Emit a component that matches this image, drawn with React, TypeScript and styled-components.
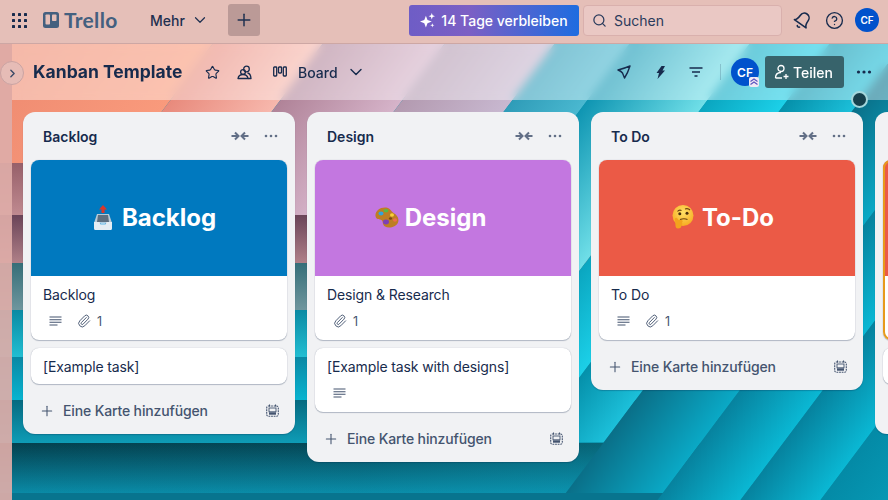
import React from "react";
import styled, { createGlobalStyle } from "styled-components";
import { ChevronDown, ChevronRight, Plus, Search, HelpCircle, Star, Paperclip } from "lucide-react";

const Global = createGlobalStyle`
  html, body { margin: 0; padding: 0; }
  body { width: 888px; height: 500px; overflow: hidden; font-family: Inter, "Noto Sans", sans-serif; color: #172b4d; }
  * { box-sizing: border-box; }
`;

const Page = styled.div`
  width: 888px; height: 500px; display: flex; flex-direction: column; overflow: hidden; background: #0a7f96;
`;
const TopBar = styled.header`
  height: 44px; flex: none; display: flex; align-items: center; padding: 0 0 3px 12px;
  background: #e5bfb8; border-bottom: 1px solid #cda7a4; color: #2a3b5c;
`;
const AppGrid = styled.svg` width: 15px; height: 15px; flex: none; `;
const Logo = styled.div`
  display: flex; align-items: center; gap: 5px; margin-left: 16px; color: #44607f; width: 107px;
  font: 700 21px/24px Lato, sans-serif; letter-spacing: .3px;
`;
const MenuButton = styled.div`
  display: flex; align-items: center; gap: 6px; font-size: 14px; font-weight: 500; color: #1f3050; width: 78px;
`;
const CreateButton = styled.div`
  width: 32px; height: 32px; border-radius: 3px; background: #bb9a97; display: flex; align-items: center; justify-content: center; color: #1f3050;
`;
const Trial = styled.div`
  margin-left: 149px; width: 170px; height: 31px; border-radius: 3px; display: flex; align-items: center; justify-content: center; gap: 6px;
  color: #fff; font-size: 14px; font-weight: 500; background: linear-gradient(90deg, #6e5dc6, #7c5fc4 35%, #1e6ce0);
`;
const SearchBox = styled.div`
  margin-left: 4px; width: 199px; height: 31px; border-radius: 4px; border: 1px solid #d9b0ad; background: #eac8c4;
  display: flex; align-items: center; gap: 7px; padding-left: 8px; font-size: 14px; color: #2a3b5c;
`;
const TopIcons = styled.div`
  display: flex; align-items: center; margin-left: 11px; gap: 13px; color: #172b4d;
`;
const TiltedBell = styled.svg`
  width: 19px; height: 19px; transform: rotate(35deg);
`;
const Avatar = styled.div<{ $size: number; $font: number }>`
  position: relative; width: ${p => p.$size}px; height: ${p => p.$size}px; border-radius: 50%; background: #0052cc; color: #fff;
  display: flex; align-items: center; justify-content: center; font-size: ${p => p.$font}px; font-weight: 600; flex: none;
`;
const TopAvatar = styled(Avatar)`
  margin-left: -2px;
`;
const AdminBadge = styled.svg`
  position: absolute; right: 0; bottom: -1px; width: 10px; height: 10px;
`;
const Body = styled.div`
  position: relative; flex: 1; display: flex; min-height: 0;
`;
const Wallpaper = styled.svg`
  position: absolute; inset: 0; width: 888px; height: 456px;
`;
const SideRail = styled.div`
  position: relative; width: 12px; flex: none; background: rgba(222, 172, 168, .92);
`;
const RailToggle = styled.div`
  position: absolute; left: 0; top: 17px; width: 24px; height: 24px; border-radius: 50%; background: #e6bcb6; border: 1px solid #c9a3a2;
  display: flex; align-items: center; justify-content: center; color: #3a4a68; z-index: 2;
`;
const Main = styled.div`
  position: relative; flex: 1; min-width: 0; display: flex; flex-direction: column;
`;
const BoardBar = styled.div`
  height: 56px; flex: none; display: flex; align-items: center; padding-left: 21px; color: #172b4d;
  background: rgba(255, 255, 255, .4); backdrop-filter: blur(5px);
`;
const BoardTitle = styled.h1`
  margin: 0; font-size: 17.5px; font-weight: 700; line-height: 24px; width: 172px; color: #172b4d;
`;
const BarIcon = styled.div<{ $w: number }>`
  width: ${p => p.$w}px; display: flex; align-items: center; flex: none;
`;
const ViewSwitch = styled.div`
  display: flex; align-items: center; font-size: 14px; font-weight: 500; color: #172b4d; gap: 11px; width: 344px; margin-left: 11px; flex: none;
`;
const ViewChevron = styled(ChevronDown)`
  margin-left: -3px;
`;
const Divider = styled.div`
  width: 1px; height: 16px; background: rgba(23, 43, 77, .2); margin: 0 10px 0 0; flex: none;
`;
const ShareButton = styled.div`
  margin-left: 6px; width: 79px; height: 32px; border-radius: 3px; background: #37636b; color: #fff; font-size: 14px; font-weight: 500;
  display: flex; align-items: center; gap: 3px; padding-left: 9px; flex: none;
`;
const MoreDark = styled.svg` margin-left: 11px; width: 18px; height: 18px; flex: none; `;
const Dot = styled.div`
  position: absolute; right: 20px; top: 47px; width: 17px; height: 17px; border-radius: 50%; background: #16404c; border: 2px solid #a4d7dc; z-index: 3;
`;
const Lists = styled.div`
  display: flex; align-items: flex-start; gap: 12px; padding: 12px 0 0 11px; overflow: hidden; flex: 1;
`;
const List = styled.section`
  width: 272px; flex: none; border-radius: 12px; background: #f1f2f4; padding: 0 8px; box-shadow: 0 1px 1px #091e4240;
`;
const ListHead = styled.div`
  height: 48px; display: flex; align-items: center; padding: 0 8px 0 12px;
`;
const ListName = styled.h2`
  margin: 0; flex: 1; font-size: 14px; font-weight: 600; color: #172b4d;
`;
const ListTools = styled.div`
  display: flex; align-items: center; gap: 14px; color: #626f86;
`;
const Stack = styled.div`
  display: flex; flex-direction: column; gap: 8px;
`;
const Card = styled.article<{ $edge?: string }>`
  background: #fff; border-radius: 8px; overflow: hidden; box-shadow: 0 1px 1px #091e4240, 0 0 1px #091e424f;
  ${p => p.$edge ? `outline: 2px solid ${p.$edge}; outline-offset: -2px;` : ""}
`;
const Cover = styled.div<{ $bg: string; $shift: number; $gap: number }>`
  height: 116px; background: ${p => p.$bg}; display: flex; align-items: center; justify-content: center; gap: ${p => p.$gap}px;
  color: #fff; font-size: 24px; font-weight: 700; padding: 0 ${p => p.$shift}px 2px 0;
`;
const CardBody = styled.div`
  padding: 9px 12px 7px; min-height: 36px;
`;
const CardTitle = styled.div`
  font-size: 14px; line-height: 20px; color: #172b4d; letter-spacing: -.12px;
`;
const Badges = styled.div`
  display: flex; align-items: center; gap: 15px; height: 24px; margin-top: 4px; padding-left: 6px; color: #44546f; font-size: 12.5px;
`;
const Badge = styled.span`
  display: flex; align-items: center; gap: 6px; white-space: nowrap;
`;
const AddRow = styled.div`
  height: 50px; display: flex; align-items: center; padding: 3px 8px 0; color: #44546f; font-size: 14px; font-weight: 500; gap: 8px; letter-spacing: -.14px;
`;
const AddLabel = styled.span` flex: 1; `;

const Dots = () => (
  <svg width="16" height="16" viewBox="0 0 16 16" fill="currentColor"><circle cx="3" cy="8" r="1.3" /><circle cx="8" cy="8" r="1.3" /><circle cx="13" cy="8" r="1.3" /></svg>
);
const Collapse = () => (
  <svg width="18" height="12" viewBox="0 0 18 12" fill="none" stroke="currentColor" strokeWidth="2"><path d="M0.5 6H7M4 2.500 7.500 6 4 9.500" /><path d="M17.500 6H11M14 2.500 10.500 6 14 9.500" /></svg>
);
const Lines = () => (
  <svg width="13" height="10" viewBox="0 0 13 10" fill="none" stroke="currentColor" strokeWidth="1.100"><path d="M.5 1h12M.5 3.700h12M.5 6.300h12M.5 9h8" /></svg>
);
const TemplateIcon = () => (
  <svg width="13" height="13" viewBox="0 0 13 13" fill="none" stroke="currentColor" strokeWidth="1.100"><rect x=".7" y="2" width="11.600" height="10.300" rx="1.800" strokeDasharray="1.800 .8" /><rect x="3" y="4" width="7" height="3.800" stroke="currentColor" strokeWidth=".9" /><rect x="3" y="8.300" width="7" height="2.400" fill="currentColor" stroke="none" /><path d="M3.500 .5v2M9.500 .5v2" /></svg>
);
const Inbox = () => (
  <svg width="20" height="25" viewBox="0 0 20 25">
    <path d="M10 0 14 4.500H11.500V8H8.500V4.500H6Z" fill="#d9362b" />
    <path d="M4 9H16L19 18H1Z" fill="#b8c9d6" /><path d="M5 10H15L16 17H4Z" fill="#5d6f80" />
    <path d="M1 17H6.500Q7 20 10 20T13.500 17H19V23.500Q19 25 17.500 25H2.500Q1 25 1 23.500Z" fill="#e4edf3" />
    <path d="M7 17.500H13L12 20H8Z" fill="#9fd2ee" />
  </svg>
);
const Palette = () => (
  <svg width="24" height="21" viewBox="0 0 24 21">
    <path d="M11 0.500C5 0 0 4 0.500 9 1 13 5 12 6.500 13 8.500 14.500 7 17.500 10 19.500 14 22 21 20 23 15.500 24.500 11 22 8 18.500 6 15.500 3.500 15 1 11 .5Z" fill="#bd7e24" />
    <ellipse cx="6" cy="6.500" rx="2.500" ry="2" fill="#2fa3e0" />
    <ellipse cx="11" cy="3.800" rx="2.400" ry="1.800" fill="#57b947" />
    <ellipse cx="17" cy="8" rx="2" ry="1.700" fill="#f6cf39" />
    <ellipse cx="20" cy="13" rx="2" ry="1.800" fill="#ee6c4d" />
    <ellipse cx="11" cy="15" rx="3" ry="2.400" fill="#7d3fb5" />
    <ellipse cx="15.500" cy="11.500" rx="1.600" ry="1.300" fill="#7a4a16" />
  </svg>
);
const Thinking = () => (
  <svg width="22" height="24" viewBox="0 0 22 24">
    <defs><radialGradient id="th" cx=".5" cy=".35" r=".7"><stop offset="0" stopColor="#ffe066" /><stop offset="1" stopColor="#f6a81c" /></radialGradient></defs>
    <circle cx="11" cy="10.500" r="10.500" fill="url(#th)" />
    <path d="M5.500 6.500Q7 4.500 9.500 5.500M13 4Q16 3 18 5" stroke="#6b4310" strokeWidth="1.200" fill="none" />
    <circle cx="7.800" cy="8.800" r="1.500" fill="#4a2f0c" /><circle cx="15" cy="8.300" r="1.500" fill="#4a2f0c" />
    <path d="M8 14.500Q12 13 15.500 14.500" stroke="#6b4310" strokeWidth="1.200" fill="none" />
    <path d="M3 15.500C2 13 4.500 12 5.500 13.500L6.500 15H10Q11.500 16 10 17.500 11 19 9.500 20 9.500 23.500 6 23.500 3.500 23.500 3.500 20.500Z" fill="#f3a31e" />
  </svg>
);

/* Wallpaper geometry: diagonal panels whose edges run at dx/dy = -0.75, and a staircase of horizontal bands. */
const edge = (x110: number, y: number) => x110 - 0.75 * (y - 110);
type PanelSpec = [number, number, number, number, string, string];
const panels: PanelSpec[] = [
  [-300, 163, 44, 163, "#ee8a70", "#f99a7c"],
  [163, 273, 44, 163, "#e88a7c", "#f7b8ad"],
  [273, 395, 44, 215, "#b08398", "#d6b4ca"],
  [395, 505, 44, 215, "#b39ab0", "#c8b8d0"],
  [505, 580, 44, 215, "#2f9cb8", "#4ab8d0"],
  [580, 700, 44, 442, "#0f95b2", "#70dfe8"],
  [700, 780, 44, 442, "#0aa6c0", "#1cd0e8"],
  [780, 853, 44, 442, "#0590aa", "#1cc0da"],
  [853, 950, 44, 493, "#0a6f88", "#0aa9c6"],
  [950, 1033, 44, 500, "#07829e", "#0ab8d4"],
  [1033, 1113, 44, 500, "#06829e", "#0ab8d4"],
  [1113, 1300, 44, 500, "#048aa6", "#0ab0cc"],
];
const bands: [number, number, string, string][] = [
  [163, 215, "#96606a", "#c08a90"],
  [215, 263, "#6a4458", "#b08088"],
  [263, 310, "#356e78", "#6f969e"],
  [310, 357, "#0a8aa3", "#22bed2"],
  [357, 400, "#0a88a4", "#08b4d0"],
  [400, 443, "#066a80", "#0e9cb6"],
  [443, 493, "#04404e", "#0a8aa6"],
  [493, 500, "#08748e", "#08748e"],
];

const wall = (
  <Wallpaper viewBox="0 44 888 456" preserveAspectRatio="none">
    <defs>
      {bands.map(([t, b, c1, c2], i) => (
        <linearGradient key={i} id={`band${i}`} gradientUnits="userSpaceOnUse" x1="0" y1={t} x2="0" y2={b}>
          <stop offset="0" stopColor={c1} /><stop offset="1" stopColor={c2} />
        </linearGradient>
      ))}
      {panels.map(([l, r, , , c1, c2], i) => {
        const w = Math.min(r - l, 200);
        return (
          <linearGradient key={i} id={`panel${i}`} gradientUnits="userSpaceOnUse" x1={r - w} y1="110" x2={r - w + w * 0.64} y2={110 + w * 0.48}>
            <stop offset="0" stopColor={c1} /><stop offset="1" stopColor={c2} />
          </linearGradient>
        );
      })}
      <linearGradient id="lift" x1="0" x2="1" y1="0" y2="0">
        <stop offset="0" stopColor="#0ea5c0" stopOpacity="0" /><stop offset=".5" stopColor="#0ea5c0" stopOpacity=".08" /><stop offset="1" stopColor="#0ea5c0" stopOpacity=".5" />
      </linearGradient>
    </defs>
    <rect x="0" y="44" width="888" height="456" fill="#0a8ea8" />
    {bands.map(([t, b], i) => <rect key={i} x="0" y={t} width="720" height={b - t} fill={`url(#band${i})`} />)}
    <rect x="0" y="443" width="720" height="50" fill="url(#lift)" />
    {panels.map(([l, r, t, b], i) => (
      <polygon key={i} fill={`url(#panel${i})`} points={`${edge(l, t)},${t} ${edge(r, t)},${t} ${edge(r, b)},${b} ${edge(l, b)},${b}`} />
    ))}
  </Wallpaper>
);

type Col = {
  name: string; cover: string; shift: number; gap: number; art: React.ReactNode; coverText: string; title: string; desc: boolean;
  second?: { text: string; desc: boolean };
};
const cols: Col[] = [
  { name: "Backlog", cover: "#0079bf", shift: 9, gap: 9, art: <Inbox />, coverText: "Backlog", title: "Backlog", desc: true, second: { text: "[Example task]", desc: false } },
  { name: "Design", cover: "#c377e0", shift: 25, gap: 6, art: <Palette />, coverText: "Design", title: "Design & Research", desc: false, second: { text: "[Example task with designs]", desc: true } },
  { name: "To Do", cover: "#eb5a46", shift: 8, gap: 8, art: <Thinking />, coverText: "To-Do", title: "To Do", desc: true },
];

const ListView = ({ c }: { c: Col }) => (
  <List>
    <ListHead>
      <ListName>{c.name}</ListName>
      <ListTools><Collapse /><Dots /></ListTools>
    </ListHead>
    <Stack>
      <Card>
        <Cover $bg={c.cover} $shift={c.shift} $gap={c.gap}>{c.art}<span>{c.coverText}</span></Cover>
        <CardBody>
          <CardTitle>{c.title}</CardTitle>
          <Badges>
            {c.desc && <Badge><Lines /></Badge>}
            <Badge><Paperclip size={14} strokeWidth={1.6} />1</Badge>
          </Badges>
        </CardBody>
      </Card>
      {c.second && (
        <Card>
          <CardBody>
            <CardTitle>{c.second.text}</CardTitle>
            {c.second.desc && <Badges><Badge><Lines /></Badge></Badges>}
          </CardBody>
        </Card>
      )}
    </Stack>
    <AddRow>
      <Plus size={16} strokeWidth={1.6} />
      <AddLabel>Eine Karte hinzufügen</AddLabel>
      <TemplateIcon />
    </AddRow>
  </List>
);

export default function App() {
  return (
    <Page>
      <Global />
      <TopBar>
        <AppGrid viewBox="0 0 15 15" fill="#172b4d">
          {[1.5, 7.5, 13.5].flatMap(y => [1.5, 7.5, 13.5].map(x => <rect key={`${x}-${y}`} x={x - 1.5} y={y - 1.5} width="3" height="3" rx=".6" />))}
        </AppGrid>
        <Logo>
          <svg width="16" height="16" viewBox="0 0 16 16"><rect width="16" height="16" rx="2.500" fill="#44607f" /><rect x="2.500" y="2.500" width="4.500" height="10" rx=".8" fill="#e5bfb8" /><rect x="9" y="2.500" width="4.500" height="6.500" rx=".8" fill="#e5bfb8" /></svg>
          Trello
        </Logo>
        <MenuButton>Mehr <ChevronDown size={18} strokeWidth={1.6} /></MenuButton>
        <CreateButton><Plus size={20} strokeWidth={1.8} /></CreateButton>
        <Trial>
          <svg width="15" height="15" viewBox="0 0 14 14" fill="#fff"><path d="M5.500 2.500 7 6.500 11 8 7 9.500 5.500 13.500 4 9.500 0 8 4 6.500Z" /><path d="M11 0 11.800 2.200 14 3 11.800 3.800 11 6 10.200 3.800 8 3 10.200 2.200Z" /><path d="M11.500 9.500 12 11 13.500 11.500 12 12 11.500 13.500 11 12 9.500 11.500 11 11Z" /></svg>
          14 Tage verbleiben
        </Trial>
        <SearchBox><Search size={15} strokeWidth={2} />Suchen</SearchBox>
        <TopIcons>
          <TiltedBell viewBox="0 0 24 24" fill="none" stroke="currentColor" strokeWidth="2" strokeLinejoin="round" strokeLinecap="round"><path d="M6 8a6 6 0 0 1 12 0c0 7 3 9 3 9H3s3-2 3-9" /><path d="M10.300 21a2 2 0 0 0 3.400 0" /></TiltedBell>
          <HelpCircle size={19} strokeWidth={1.7} />
          <TopAvatar $size={24} $font={10}>CF</TopAvatar>
        </TopIcons>
      </TopBar>
      <Body>
        {wall}
        <SideRail><RailToggle><ChevronRight size={13} strokeWidth={2.6} /></RailToggle></SideRail>
        <Main>
          <BoardBar>
            <BoardTitle>Kanban Template</BoardTitle>
            <BarIcon $w={32}><Star size={15} strokeWidth={1.8} /></BarIcon>
            <BarIcon $w={25}>
              <svg width="15" height="15" viewBox="0 0 15 15" fill="none" stroke="currentColor" strokeWidth="1.300" strokeLinejoin="round"><circle cx="9.500" cy="4" r="2.800" /><circle cx="6" cy="7" r="2.400" /><path d="M1 13.500C1.500 10.500 4 9.500 6 9.500S10.500 10.500 11 13.500Z" /><path d="M10.500 8C12.500 8.300 13.800 10 14 13.500H11" /></svg>
            </BarIcon>
            <ViewSwitch>
              <svg width="14" height="12" viewBox="0 0 14 12" fill="none" stroke="currentColor" strokeWidth="1.300"><rect x=".7" y="1" width="3" height="9" rx=".7" /><rect x="5.500" y="1" width="3" height="6" rx=".7" /><rect x="10.300" y="1" width="3" height="9" rx=".7" /></svg>
              <span>Board</span>
              <ViewChevron size={20} strokeWidth={1.7} />
            </ViewSwitch>
            <BarIcon $w={38}>
              <svg width="14" height="14" viewBox="0 0 14 14" fill="none" stroke="currentColor" strokeWidth="1.400" strokeLinejoin="round"><path d="M13 1Q7 3.500 1 5Q4 6 5.500 8Q6.500 10.500 7.500 13Q11 7.500 13 1Z" /></svg>
            </BarIcon>
            <BarIcon $w={34}>
              <svg width="10" height="13" viewBox="0 0 10 13" fill="currentColor"><path d="M6.500 0H10L7.500 4.500H10L2.500 13 4 7H1.500Z" /></svg>
            </BarIcon>
            <BarIcon $w={31}>
              <svg width="14" height="11" viewBox="0 0 14 11" fill="none" stroke="currentColor" strokeWidth="1.400"><path d="M0.500 1h13M3 5h8M5.500 9h3" /></svg>
            </BarIcon>
            <Divider />
            <Avatar $size={28} $font={12}>
              CF
              <AdminBadge viewBox="0 0 10 10"><rect width="10" height="10" rx="2" fill="#f1e9f4" /><path d="M1.500 4.500 5 2 8.500 4.500M1.500 7.500 5 5 8.500 7.500" fill="none" stroke="#5c54c0" strokeWidth="1.200" /></AdminBadge>
            </Avatar>
            <ShareButton>
              <svg width="16" height="16" viewBox="0 0 16 16" fill="none" stroke="currentColor" strokeWidth="1.300"><circle cx="7" cy="4.500" r="3" /><path d="M1.500 14C1.500 10.500 3.500 8.500 7 8.500M1.500 14H8M12 10v5M9.500 12.500h5" /></svg>
              Teilen
            </ShareButton>
            <MoreDark viewBox="0 0 18 18" fill="#172b4d"><circle cx="3.500" cy="9" r="1.600" /><circle cx="9" cy="9" r="1.600" /><circle cx="14.500" cy="9" r="1.600" /></MoreDark>
          </BoardBar>
          <Dot />
          <Lists>
            {cols.map(c => <ListView key={c.name} c={c} />)}
            <List>
              <ListHead />
              <Stack>
                <Card $edge="#e79a1c"><Cover $bg="#eb5a46" $shift={0} $gap={0} /><CardBody><CardTitle>&nbsp;</CardTitle><Badges /></CardBody></Card>
                <Card><CardBody><CardTitle>&nbsp;</CardTitle></CardBody></Card>
              </Stack>
              <AddRow />
            </List>
          </Lists>
        </Main>
      </Body>
    </Page>
  );
}
